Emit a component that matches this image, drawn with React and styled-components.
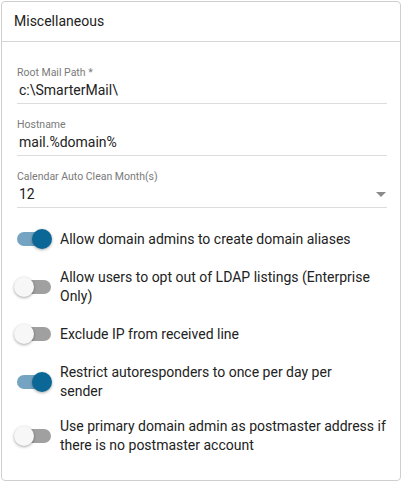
import React, { useState } from 'react'
import styled, { createGlobalStyle } from 'styled-components'

const GlobalStyle = createGlobalStyle`
  body {
    margin: 0;
    background: #fff;
    font-family: Roboto, 'Liberation Sans', sans-serif;
    color: #222;
  }
`

const fields = [
    { label: 'Root Mail Path *', value: 'c:\\SmarterMail\\' },
    { label: 'Hostname', value: 'mail.%domain%' },
    { label: 'Calendar Auto Clean Month(s)', value: '12', select: true },
]

// narrow: the source wraps this label sooner than the others
const initialToggles = [
    { label: 'Allow domain admins to create domain aliases', on: true },
    { label: 'Allow users to opt out of LDAP listings (Enterprise Only)', on: false },
    { label: 'Exclude IP from received line', on: false },
    { label: 'Restrict autoresponders to once per day per sender', on: true, narrow: true },
    { label: 'Use primary domain admin as postmaster address if there is no postmaster account', on: false },
]

function App() {
    const [toggles, setToggles] = useState(initialToggles)

    function flip(i) {
        setToggles(toggles.map((t, idx) => idx === i ? { ...t, on: !t.on } : t))
    }

    return (
        <Page>
            <GlobalStyle />
            <Card>
                <CardHeader>Miscellaneous</CardHeader>
                <CardBody>
                    {fields.map(f => (
                        <Field key={f.label}>
                            <FieldLabel>{f.label}</FieldLabel>
                            <FieldValue>
                                <span>{f.value}</span>
                                {f.select && <Caret />}
                            </FieldValue>
                        </Field>
                    ))}
                    <ToggleList>
                        {toggles.map((t, i) => (
                            <ToggleRow key={t.label} onClick={() => flip(i)}>
                                <Switch>
                                    <Track $on={t.on} />
                                    <Knob $on={t.on} />
                                </Switch>
                                <ToggleText $narrow={t.narrow}>{t.label}</ToggleText>
                            </ToggleRow>
                        ))}
                    </ToggleList>
                </CardBody>
            </Card>
        </Page>
    )
}

const Page = styled.div`
    padding: 1px 4px 2px 1px;
`

const Card = styled.div`
    width: 400px;
    box-sizing: border-box;
    border: 1px solid #cfcfcf;
    border-radius: 4px;
    background: #fff;
`

const CardHeader = styled.div`
    height: 39px;
    line-height: 39px;
    padding: 0 12px;
    font-size: 14px;
    color: #222;
    border-bottom: 1px solid #d6d6d6;
`

const CardBody = styled.div`
    padding: 24px 13px 26px 15px;
`

const Field = styled.div`
    margin-bottom: 14px;
    border-bottom: 1px solid #dcdcdc;
    padding-bottom: 3px;
`

const FieldLabel = styled.div`
    font-size: 10.5px;
    line-height: 14px;
    color: #7a7a7a;
`

const FieldValue = styled.div`
    display: flex;
    align-items: center;
    justify-content: space-between;
    font-size: 14px;
    line-height: 20px;
    color: #222;
    padding-left: 2px;
`

const Caret = styled.span`
    width: 0;
    height: 0;
    border-left: 5px solid transparent;
    border-right: 5px solid transparent;
    border-top: 5px solid #8a8a8a;
    margin-right: 1px;
`

const ToggleList = styled.div`
    display: flex;
    flex-direction: column;
    gap: 17px;
    margin-top: 19px;
`

const ToggleRow = styled.div`
    display: flex;
    align-items: center;
    gap: 8px;
    min-height: 24px;
    cursor: pointer;
`

const Switch = styled.div`
    position: relative;
    flex: 0 0 36px;
    height: 24px;
    margin-left: -1px;
`

const Track = styled.div`
    position: absolute;
    left: 1px;
    top: 5px;
    width: 34px;
    height: 14px;
    border-radius: 7px;
    background: ${p => p.$on ? '#74a4c2' : '#a0a0a0'};
`

const Knob = styled.div`
    position: absolute;
    top: 2px;
    left: ${p => p.$on ? '16px' : '-2px'};
    width: 20px;
    height: 20px;
    border-radius: 50%;
    background: ${p => p.$on ? '#0b6896' : '#f7f7f7'};
    box-shadow: 0 1px 3px rgba(0, 0, 0, 0.35);
`

const ToggleText = styled.div`
    font-size: 14px;
    line-height: 18.5px;
    color: #222;
    max-width: ${p => p.$narrow ? '290px' : 'none'};
`

export default App
